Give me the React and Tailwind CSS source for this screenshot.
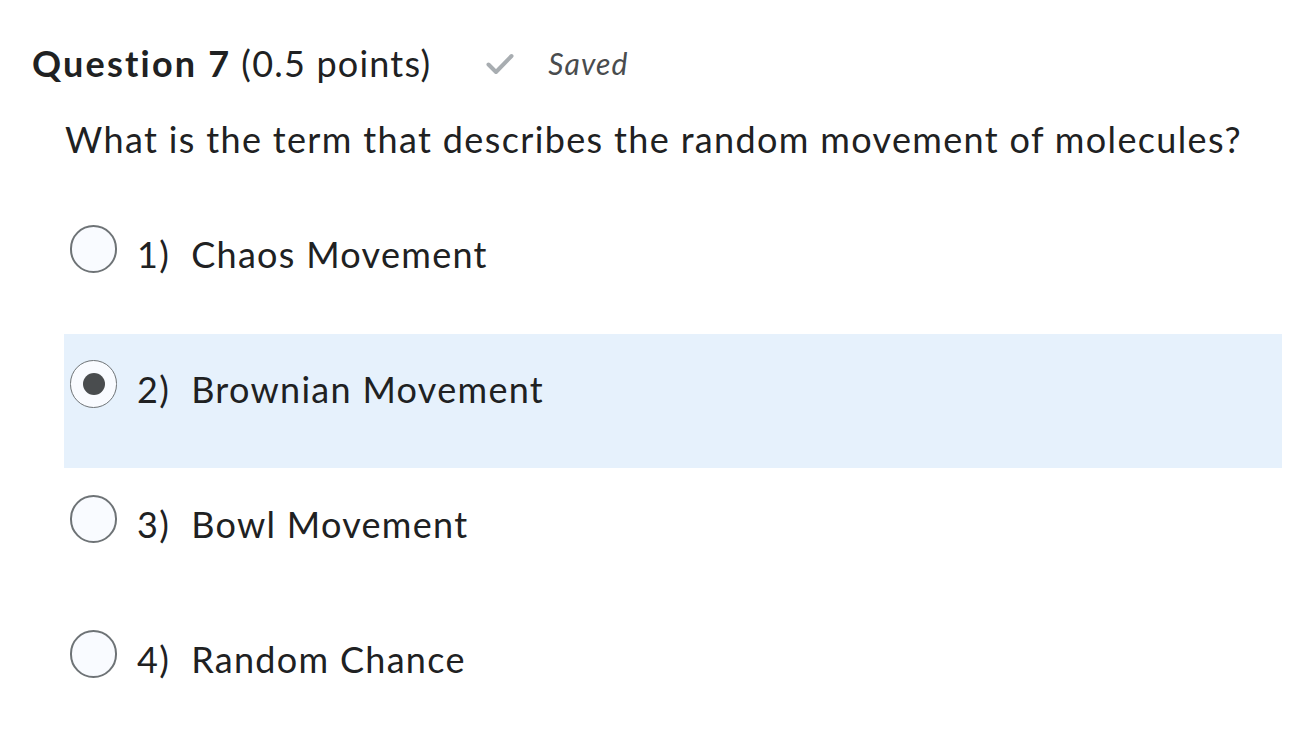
const options = [
  { id: 1, label: "Chaos Movement" },
  { id: 2, label: "Brownian Movement", selected: true },
  { id: 3, label: "Bowl Movement" },
  { id: 4, label: "Random Chance" },
];

const SavedCheck = () => (
  <svg viewBox="0 0 28 22" className="h-[22px] w-[28px]" fill="none">
    <path
      d="M2.5 11.5 L10 19 L25.5 3"
      stroke="#a8adb1"
      strokeWidth="4"
      strokeLinecap="round"
      strokeLinejoin="round"
    />
  </svg>
);

const Radio = ({ checked }) => (
  <span
    className={
      "flex h-[48px] w-[47px] shrink-0 items-center justify-center rounded-full bg-[#f9fbff] " +
      (checked ? "border-[1.5px] border-[#6e7376]" : "border-2 border-[#6e7376]")
    }
  >
    {checked && <span className="h-[22px] w-[22px] rounded-full bg-[#494c4e]" />}
  </span>
);

export default function App() {
  return (
    <div
      className="min-h-[745px] bg-white text-[#202122] tracking-[1.2px] [font-variant-ligatures:none]"
      style={{ fontFamily: "Lato, 'Noto Sans', sans-serif" }}
    >
      <div className="pt-[39px]">
        <div className="flex items-center pl-[32px] text-[36px] leading-[48px]">
          <span className="font-bold tracking-[2.2px]">Question 7</span>
          <span className="ml-[10px]">(0.5 points)</span>
          <span className="ml-[55px] mt-[2px]">
            <SavedCheck />
          </span>
          <span className="ml-[34px] text-[30px] italic tracking-[1.1px] text-[#494c4e]">Saved</span>
        </div>
        <p className="mt-[28px] pl-[65px] text-[36px] leading-[48px] tracking-[1.35px]">
          What is the term that describes the random movement of molecules?
        </p>
        <div className="mt-[36px] mr-[10px] ml-[64px] flex flex-col gap-[1px]">
          {options.map((o) => (
            <div
              key={o.id}
              className={
                "flex h-[134px] items-start gap-[20px] pl-[6px] pt-[26px] " +
                (o.selected ? "bg-[#e6f1fc]" : "")
              }
            >
              <Radio checked={o.selected} />
              <span className="mt-[5px] text-[36px] leading-[48px] tracking-[1.3px]">
                {o.id}){"\u00a0\u00a0"}{o.label}
              </span>
            </div>
          ))}
        </div>
      </div>
    </div>
  );
}
